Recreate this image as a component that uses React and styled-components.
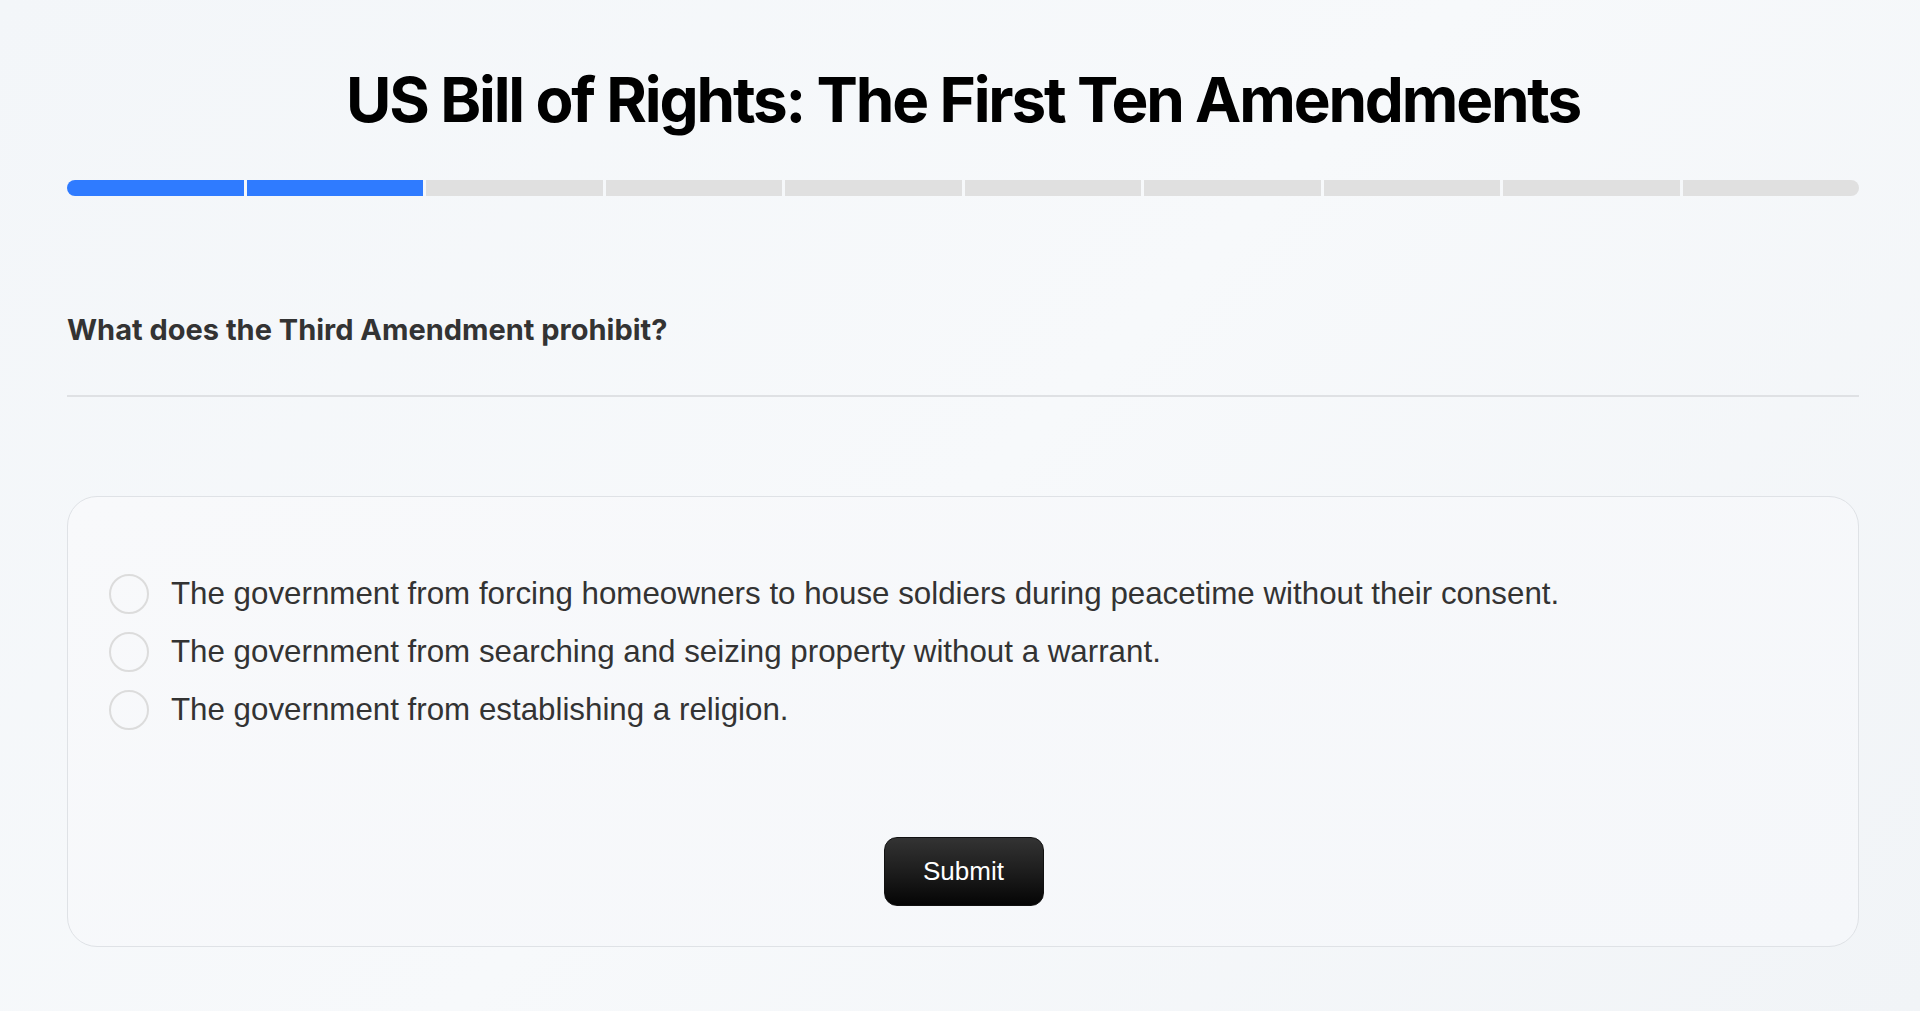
import React from "react";
import styled, { createGlobalStyle } from "styled-components";

const Global = createGlobalStyle`
  html, body { margin: 0; padding: 0; }
  body {
    background: linear-gradient(135deg, #f3f6f9 0%, #f7f9fb 50%, #f1f4f7 100%);
    min-height: 1011px;
    font-family: "Liberation Sans", Arial, sans-serif;
  }
`;

const Page = styled.div`
  box-sizing: border-box;
  min-height: 1011px;
  padding: 60px 61px 40px 67px;
  display: flex;
  flex-direction: column;
`;

const Title = styled.h1`
  margin: 0;
  text-align: center;
  font-family: Inter, "Liberation Sans", sans-serif;
  font-weight: 700;
  font-size: 62px;
  line-height: 80px;
  letter-spacing: -0.035em;
  color: #000;
`;

const Progress = styled.div`
  margin-top: 40px;
  display: flex;
  gap: 3px;
  height: 16px;
  border-radius: 8px;
  overflow: hidden;
`;

const Segment = styled.div`
  flex: 1;
  background: ${(p) => (p.$done ? "#2f7bff" : "#e0e0e0")};
`;

const Question = styled.h2`
  margin: 114px 0 0;
  font-family: Inter, "Liberation Sans", sans-serif;
  font-weight: 700;
  font-size: 29px;
  line-height: 40px;
  letter-spacing: 0;
  color: #333;
`;

const Divider = styled.hr`
  margin: 45px 0 0;
  border: none;
  height: 2px;
  background: #dfe1e4;
`;

const Card = styled.div`
  margin-top: 99px;
  border: 1px solid #dfe2e6;
  border-radius: 30px;
  background: linear-gradient(160deg, #f8f9fb 0%, #f5f7fa 100%);
  padding: 77px 40px 40px 41px;
  display: flex;
  flex-direction: column;
`;

const Options = styled.div`
  display: flex;
  flex-direction: column;
  gap: 18px;
`;

const Option = styled.label`
  display: flex;
  align-items: center;
  gap: 22px;
  font-size: 31.3px;
  color: #333;
  cursor: pointer;
`;

const Radio = styled.span`
  box-sizing: border-box;
  flex: none;
  width: 40px;
  height: 40px;
  border-radius: 50%;
  border: 2px solid #dcdcdc;
  background: transparent;
`;

const Submit = styled.button`
  align-self: center;
  margin-top: 107px;
  width: 160px;
  height: 69px;
  border-radius: 13px;
  border: 1px solid #111;
  background: linear-gradient(180deg, #333 0%, #1d1d1d 50%, #050505 100%);
  color: #fff;
  font-family: "Liberation Sans", Arial, sans-serif;
  font-size: 26px;
  cursor: pointer;
`;

const options = [
  "The government from forcing homeowners to house soldiers during peacetime without their consent.",
  "The government from searching and seizing property without a warrant.",
  "The government from establishing a religion.",
];

export default function App() {
  return (
    <>
      <Global />
      <Page>
        <Title>US Bill of Rights: The First Ten Amendments</Title>
        <Progress>
          {Array.from({ length: 10 }).map((_, i) => (
            <Segment key={i} $done={i < 2} />
          ))}
        </Progress>
        <Question>What does the Third Amendment prohibit?</Question>
        <Divider />
        <Card>
          <Options>
            {options.map((o) => (
              <Option key={o}>
                <Radio />
                {o}
              </Option>
            ))}
          </Options>
          <Submit>Submit</Submit>
        </Card>
      </Page>
    </>
  );
}
